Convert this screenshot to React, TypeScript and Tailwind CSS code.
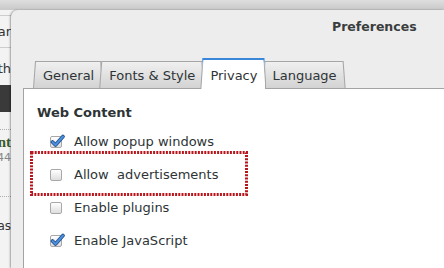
const font = "font-['DejaVu_Sans','Liberation_Sans',sans-serif]"

function Tab({ label, active }: { label: string; active?: boolean }) {
  return (
    <div
      className={
        active
          ? 'relative z-10 h-[31px] -mb-px pl-[10px] pr-[9px] -mr-[4px] pt-[10px]'
          : 'relative h-[27px] pl-[10px] pr-[9px] -mr-[4px] pt-[7px]'
      }
    >
      <div
        className={
          active
            ? 'absolute inset-0 [clip-path:polygon(0_100%,2px_0,calc(100%-2px)_0,100%_100%)] bg-[linear-gradient(#3a86d8_0_2px,#a9bdd3_5px,#a6a6a6_12px)]'
            : 'absolute inset-0 [clip-path:polygon(0_100%,2px_0,calc(100%-2px)_0,100%_100%)] bg-[#a6a6a6]'
        }
      />
      <div
        className={
          active
            ? 'absolute left-px right-px top-[2px] bottom-0 [clip-path:polygon(0_100%,2px_0,calc(100%-2px)_0,100%_100%)] bg-white'
            : 'absolute left-px right-px top-px bottom-0 [clip-path:polygon(0_100%,2px_0,calc(100%-2px)_0,100%_100%)] bg-gradient-to-b from-[#f0f0f0] to-[#d3d3d3]'
        }
      />
      <span className="relative block whitespace-nowrap text-[13px] leading-[15px] text-[#2e3436]">{label}</span>
    </div>
  )
}

function Check({ label, checked }: { label: string; checked?: boolean }) {
  return (
    <div className="flex items-center h-[15px]">
      <span className="relative w-[12px] h-[12px] rounded-[2px] border border-[#a8a8a8] bg-gradient-to-b from-white to-[#dedede] shrink-0">
        {checked && (
          <svg className="absolute -left-px -top-[3px] w-[15px] h-[14px]" viewBox="0 0 15 14">
            <path d="M2.5 8 L5.5 11 L13 2.5" fill="none" stroke="#1f4f8f" strokeWidth="3.6" strokeLinecap="round" strokeLinejoin="round" />
            <path d="M2.5 8 L5.5 11 L13 2.5" fill="none" stroke="#4d8fdc" strokeWidth="2" strokeLinecap="round" strokeLinejoin="round" />
          </svg>
        )}
      </span>
      <span className="ml-[12px] whitespace-pre text-[13px] leading-[15px] text-[#2e3436]">{label}</span>
    </div>
  )
}

export default function App() {
  return (
    <div className={`relative w-[444px] h-[268px] overflow-hidden flex flex-col bg-[#f2f2f2] ${font}`}>
      {/* background window toolbar */}
      <div className="h-[10px] shrink-0 bg-gradient-to-b from-[#dedede] to-[#c9c9c9]" />

      <div className="flex flex-1 min-h-0">
        {/* strip of the window behind */}
        <div className="w-[11px] shrink-0 overflow-hidden flex flex-col bg-[#f3f3f3] text-[13px] text-[#333]">
          <div className="h-[5px]" />
          <div className="h-[33px] border-y border-[#cdcdcd] flex items-center justify-end whitespace-nowrap">ar</div>
          <div className="h-[37px] flex items-end justify-end pb-[7px] whitespace-nowrap">th</div>
          <div className="h-[27px] bg-[#3a3a3a]" />
          <div className="h-[18px] border-b border-dotted border-[#b0b0b0]" />
          <div className="h-[23px] flex items-end justify-end whitespace-nowrap font-['Liberation_Serif',serif] font-bold text-[15px] text-[#3f5a2a]">nt</div>
          <div className="h-[13px] flex items-end justify-end whitespace-nowrap text-[11px] text-[#888]">44</div>
          <div className="h-[31px] border-b border-dotted border-[#b0b0b0]" />
          <div className="h-[38px] flex items-end justify-end whitespace-nowrap text-[12px]">as</div>
        </div>

        {/* preferences dialog */}
        <div className="flex-1 flex flex-col bg-[#ededed] rounded-tl-[7px] shadow-[-1px_0_2px_rgba(0,0,0,0.35)]">
          <div className="h-[47px] shrink-0 pl-[321px] pt-[4px]">
            <span className="text-[12.5px] leading-[15px] font-bold text-[#3a3d3e]">Preferences</span>
          </div>

          <div className="ml-[12px] flex-1 flex flex-col">
            <div className="h-[31px] shrink-0 flex items-end pl-[10px]">
              <Tab label="General" />
              <Tab label="Fonts & Style" />
              <Tab label="Privacy" active />
              <Tab label="Language" />
            </div>

            <div className="flex-1 bg-white border-t border-l border-[#a3a3a3] pl-[13px] pt-[16px]">
              <div className="text-[13px] leading-[15px] font-bold text-[#2e3436]">Web Content</div>
              <div className="mt-[14px] ml-[13px] flex flex-col gap-[18px]">
                <Check label="Allow popup windows" checked />
                <Check label="Allow  advertisements" />
                <Check label="Enable plugins" />
                <Check label="Enable JavaScript" checked />
              </div>
            </div>
          </div>
        </div>
      </div>

      {/* highlight annotation */}
      <svg className="absolute left-[30px] top-[151px] w-[218px] h-[45px]" viewBox="0 0 218 45">
        <rect x="1.5" y="1.5" width="215" height="42" fill="none" stroke="#b8141c" strokeWidth="3" strokeDasharray="2 1.2" />
      </svg>
    </div>
  )
}
